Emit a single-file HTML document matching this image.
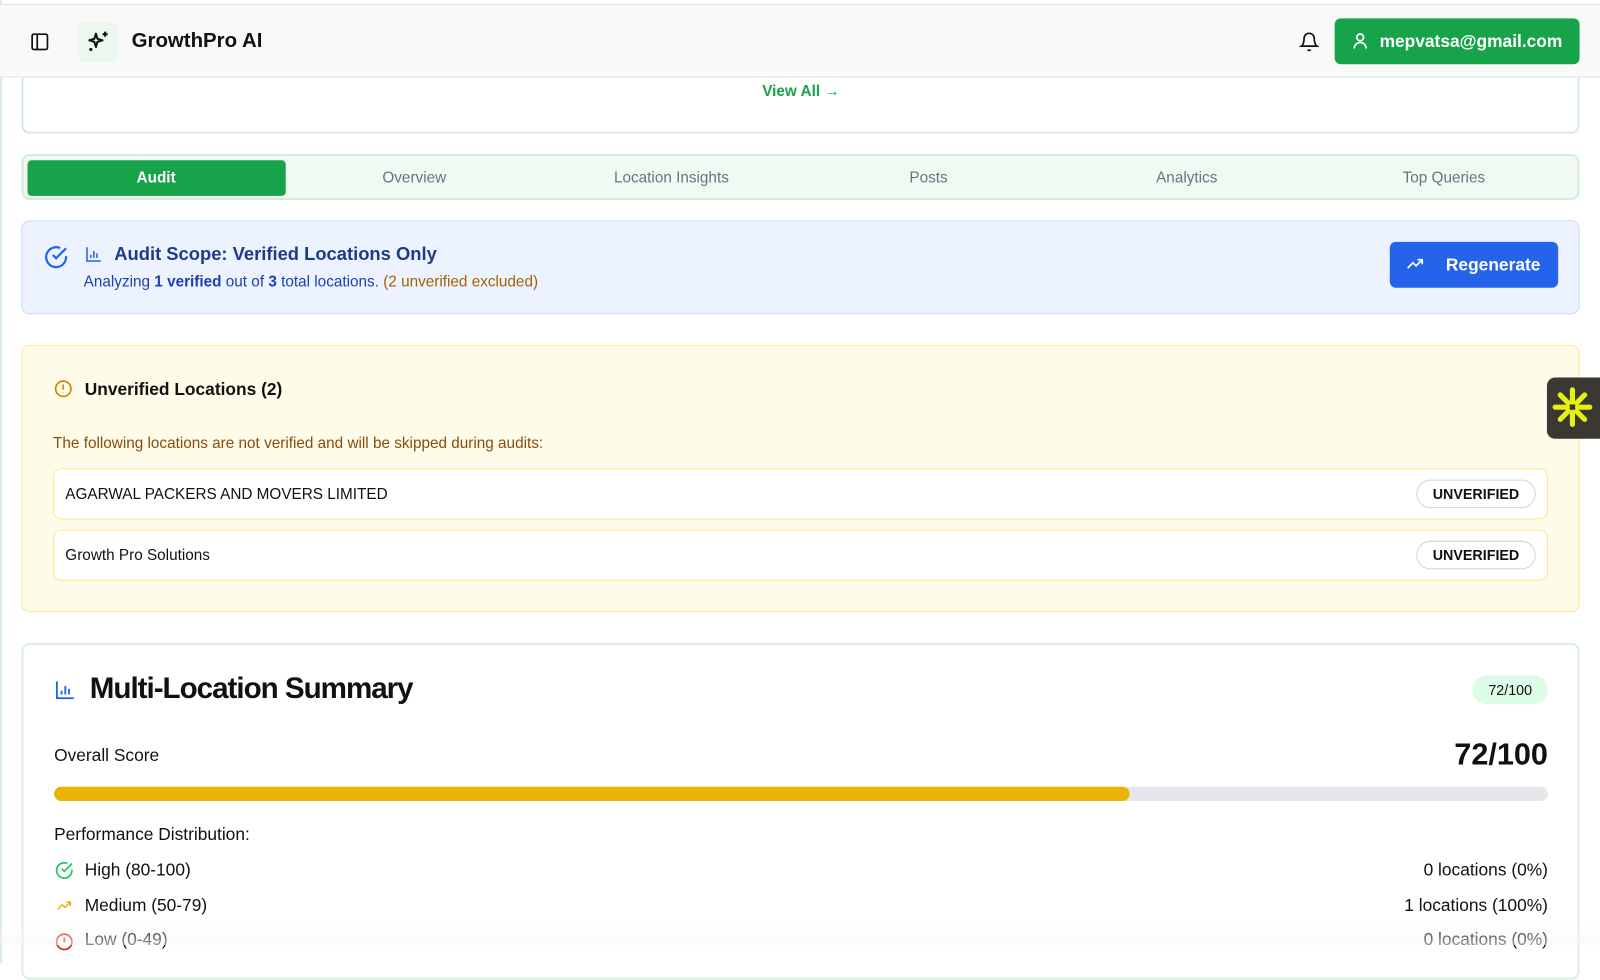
<!DOCTYPE html>
<html><head><meta charset="utf-8"><style>
*{box-sizing:border-box;margin:0;padding:0}
body{width:1600px;height:944px;overflow:hidden;background:#fff;font-family:"Liberation Sans",sans-serif;color:#111;position:relative}
#w{position:absolute;left:0;top:0;width:1568px;height:926px;transform:scale(1.0204);transform-origin:0 0}
.abs{position:absolute}
.lb{position:absolute;left:0;top:0;width:2px;height:944px;background:#d9eee0}
.hdr{position:absolute;left:0;top:4px;width:1568px;height:72px;background:#f9f9f9;border-top:1px solid #e5e5e5;border-bottom:1px solid #d4ebdc}
.card{position:absolute;border-radius:8px}
.tab{position:absolute;top:158px;height:34px;line-height:34px;text-align:center;font-size:15px;color:#6b7280;width:252px}
</style></head><body><div id="w">
<div class="lb"></div>
<div class="card" style="left:21px;top:60px;width:1527px;height:71px;border:2px solid #d4ebdc;border-top:none;background:#fff"></div>
<div class="abs" style="left:747px;top:81px;font-size:15px;color:#16a34a;font-weight:bold">View All →</div>
<div class="hdr">
 <svg class="abs" style="left:29px;top:26px" width="20" height="20" viewBox="0 0 24 24" fill="none" stroke="#111" stroke-width="2"><rect x="3" y="3" width="18" height="18" rx="2"/><path d="M9 3v18"/></svg>
 <div class="abs" style="left:76px;top:16px;width:40px;height:40px;border-radius:8px;background:#ecf8ef"></div>
 <svg class="abs" style="left:84px;top:24px" width="24" height="24" viewBox="0 0 24 24" fill="none" stroke="#111" stroke-width="2" stroke-linejoin="round"><path d="M10 4l1.5 5 5 1.5-5 1.5L10 17l-1.5-5-5-1.5 5-1.5z"/><path d="M19 2v5M16.5 4.5h5M5 18v3M3.5 19.5h3"/></svg>
 <div class="abs" style="left:129px;top:24px;font-size:20px;font-weight:bold">GrowthPro AI</div>
 <svg class="abs" style="left:1273px;top:26px" width="20" height="20" viewBox="0 0 24 24" fill="none" stroke="#111" stroke-width="2"><path d="M6 8a6 6 0 0 1 12 0c0 7 3 9 3 9H3s3-2 3-9"/><path d="M10.3 21a1.9 1.9 0 0 0 3.4 0"/></svg>
 <div class="abs" style="left:1308px;top:13px;width:240px;height:45px;background:#16a34a;border-radius:6px;color:#fff;font-size:17px;font-weight:bold;line-height:45px;padding-left:44px">mepvatsa@gmail.com</div>
 <svg class="abs" style="left:1323px;top:25px" width="20" height="20" viewBox="0 0 24 24" fill="none" stroke="#fff" stroke-width="2"><circle cx="12" cy="8" r="4"/><path d="M5 21a7 7 0 0 1 14 0"/></svg>
</div>
<div class="card" style="left:21px;top:151px;width:1527px;height:45px;border:2px solid #d4ebdc;background:#f0faf3"></div>
<div class="abs" style="left:27px;top:157px;width:253px;height:35px;background:#16a34a;border-radius:4px"></div>
<div class="tab" style="left:27px;color:#fff;font-weight:bold">Audit</div>
<div class="tab" style="left:280px">Overview</div>
<div class="tab" style="left:532px">Location Insights</div>
<div class="tab" style="left:784px">Posts</div>
<div class="tab" style="left:1037px">Analytics</div>
<div class="tab" style="left:1289px">Top Queries</div>
<div class="card" style="left:21px;top:216px;width:1527px;height:92px;border:1px solid #bfdbfe;background:#edf3fe"></div>
<svg class="abs" style="left:42px;top:239px" width="26" height="26" viewBox="0 0 24 24" fill="none" stroke="#2563eb" stroke-width="2"><path d="M21 11.1V12a9 9 0 1 1-5.3-8.2"/><path d="M21 4 12 13l-3-3"/></svg>
<svg class="abs" style="left:82px;top:240px" width="20" height="18" viewBox="0 0 24 24" fill="none" stroke="#2563eb" stroke-width="2"><path d="M3 3v18h18M8 17v-4M12 17V8M16 17v-6"/></svg>
<div class="abs" style="left:112px;top:239px;font-size:18px;font-weight:bold;color:#1e3a8a">Audit Scope: Verified Locations Only</div>
<div class="abs" style="left:82px;top:268px;font-size:15px;color:#1e40af">Analyzing <b>1 verified</b> out of <b>3</b> total locations. <span style="color:#a16207">(2 unverified excluded)</span></div>
<div class="abs" style="left:1362px;top:237px;width:165px;height:45px;background:#2563eb;border-radius:6px;color:#fff;font-size:17px;font-weight:bold;line-height:45px;padding-left:55px">Regenerate</div>
<svg class="abs" style="left:1377px;top:250px" width="20" height="18" viewBox="0 0 24 24" fill="none" stroke="#fff" stroke-width="2.2"><path d="M2 17l7-7 4 4 8-8M15 6h6v6"/></svg>
<div class="card" style="left:21px;top:338px;width:1527px;height:262px;border:1px solid #fde68a;background:#fefce8"></div>
<svg class="abs" style="left:52px;top:371px" width="20" height="20" viewBox="0 0 24 24" fill="none" stroke="#ca8a04" stroke-width="2"><circle cx="12" cy="12" r="9"/><path d="M12 7v6M12 16.5v.5"/></svg>
<div class="abs" style="left:83px;top:372px;font-size:17px;font-weight:bold">Unverified Locations (2)</div>
<div class="abs" style="left:52px;top:426px;font-size:15px;color:#854d0e">The following locations are not verified and will be skipped during audits:</div>
<div class="card" style="left:52px;top:459px;width:1465px;height:50px;border:1px solid #fde68a;background:#fff"></div>
<div class="abs" style="left:64px;top:476px;font-size:15px">AGARWAL PACKERS AND MOVERS LIMITED</div>
<div class="abs" style="left:1388px;top:470px;width:117px;height:28px;border:1px solid #d1d5db;border-radius:14px;text-align:center;line-height:26px;font-size:14px;font-weight:bold">UNVERIFIED</div>
<div class="card" style="left:52px;top:519px;width:1465px;height:50px;border:1px solid #fde68a;background:#fff"></div>
<div class="abs" style="left:64px;top:536px;font-size:15px">Growth Pro Solutions</div>
<div class="abs" style="left:1388px;top:530px;width:117px;height:28px;border:1px solid #d1d5db;border-radius:14px;text-align:center;line-height:26px;font-size:14px;font-weight:bold">UNVERIFIED</div>
<div class="abs" style="left:1516px;top:370px;width:60px;height:60px;background:#3a3833;border-radius:8px"></div>
<svg class="abs" style="left:1520px;top:378px" width="42" height="42" viewBox="0 0 42 42" stroke="#e8f012" stroke-width="5" stroke-linecap="round"><path d="M21 4v12M21 26v12M4 21h12M26 21h12M9 9l8 8M25 25l8 8M33 9l-8 8M9 33l8-8"/></svg>
<div class="card" style="left:21px;top:630px;width:1527px;height:330px;border:2px solid #dbeee2;background:#fff"></div>
<svg class="abs" style="left:53px;top:665px" width="22" height="22" viewBox="0 0 24 24" fill="none" stroke="#2563eb" stroke-width="2"><path d="M3 3v18h18M8 17v-4M12 17V8M16 17v-6"/></svg>
<div class="abs" style="left:88px;top:659px;font-size:29px;font-weight:bold;letter-spacing:-1px">Multi-Location Summary</div>
<div class="abs" style="left:1443px;top:662px;width:74px;height:28px;background:#dcfce7;border-radius:14px;text-align:center;line-height:28px;font-size:14px">72/100</div>
<div class="abs" style="left:53px;top:731px;font-size:17px">Overall Score</div>
<div class="abs" style="left:1300px;top:723px;width:217px;text-align:right;font-size:30px;font-weight:bold">72/100</div>
<div class="abs" style="left:53px;top:771px;width:1464px;height:14px;background:#e5e7eb;border-radius:7px"></div>
<div class="abs" style="left:53px;top:771px;width:1054px;height:14px;background:#eab308;border-radius:7px"></div>
<div class="abs" style="left:53px;top:808px;font-size:17px">Performance Distribution:</div>
<svg class="abs" style="left:53px;top:843px" width="20" height="20" viewBox="0 0 24 24" fill="none" stroke="#22c55e" stroke-width="2"><path d="M21 11.1V12a9 9 0 1 1-5.3-8.2"/><path d="M21 4 12 13l-3-3"/></svg>
<div class="abs" style="left:83px;top:843px;font-size:17px">High (80-100)</div>
<div class="abs" style="left:1200px;top:843px;width:317px;text-align:right;font-size:17px">0 locations (0%)</div>
<svg class="abs" style="left:53px;top:880px" width="20" height="16" viewBox="0 0 24 24" fill="none" stroke="#eab308" stroke-width="2.2"><path d="M2 17l7-7 4 4 8-8M15 6h6v6"/></svg>
<div class="abs" style="left:83px;top:878px;font-size:17px">Medium (50-79)</div>
<div class="abs" style="left:1200px;top:878px;width:317px;text-align:right;font-size:17px">1 locations (100%)</div>
<svg class="abs" style="left:53px;top:913px" width="20" height="20" viewBox="0 0 24 24" fill="none" stroke="#dc2626" stroke-width="2"><circle cx="12" cy="12" r="9"/><path d="M12 7v6"/></svg>
<div class="abs" style="left:83px;top:911px;font-size:17px">Low (0-49)</div>
<div class="abs" style="left:1200px;top:911px;width:317px;text-align:right;font-size:17px">0 locations (0%)</div>
<div class="abs" style="left:0;top:905px;width:1600px;height:21px;background:linear-gradient(rgba(255,255,255,0),rgba(245,245,245,0.6))"></div>
</div></body></html>
